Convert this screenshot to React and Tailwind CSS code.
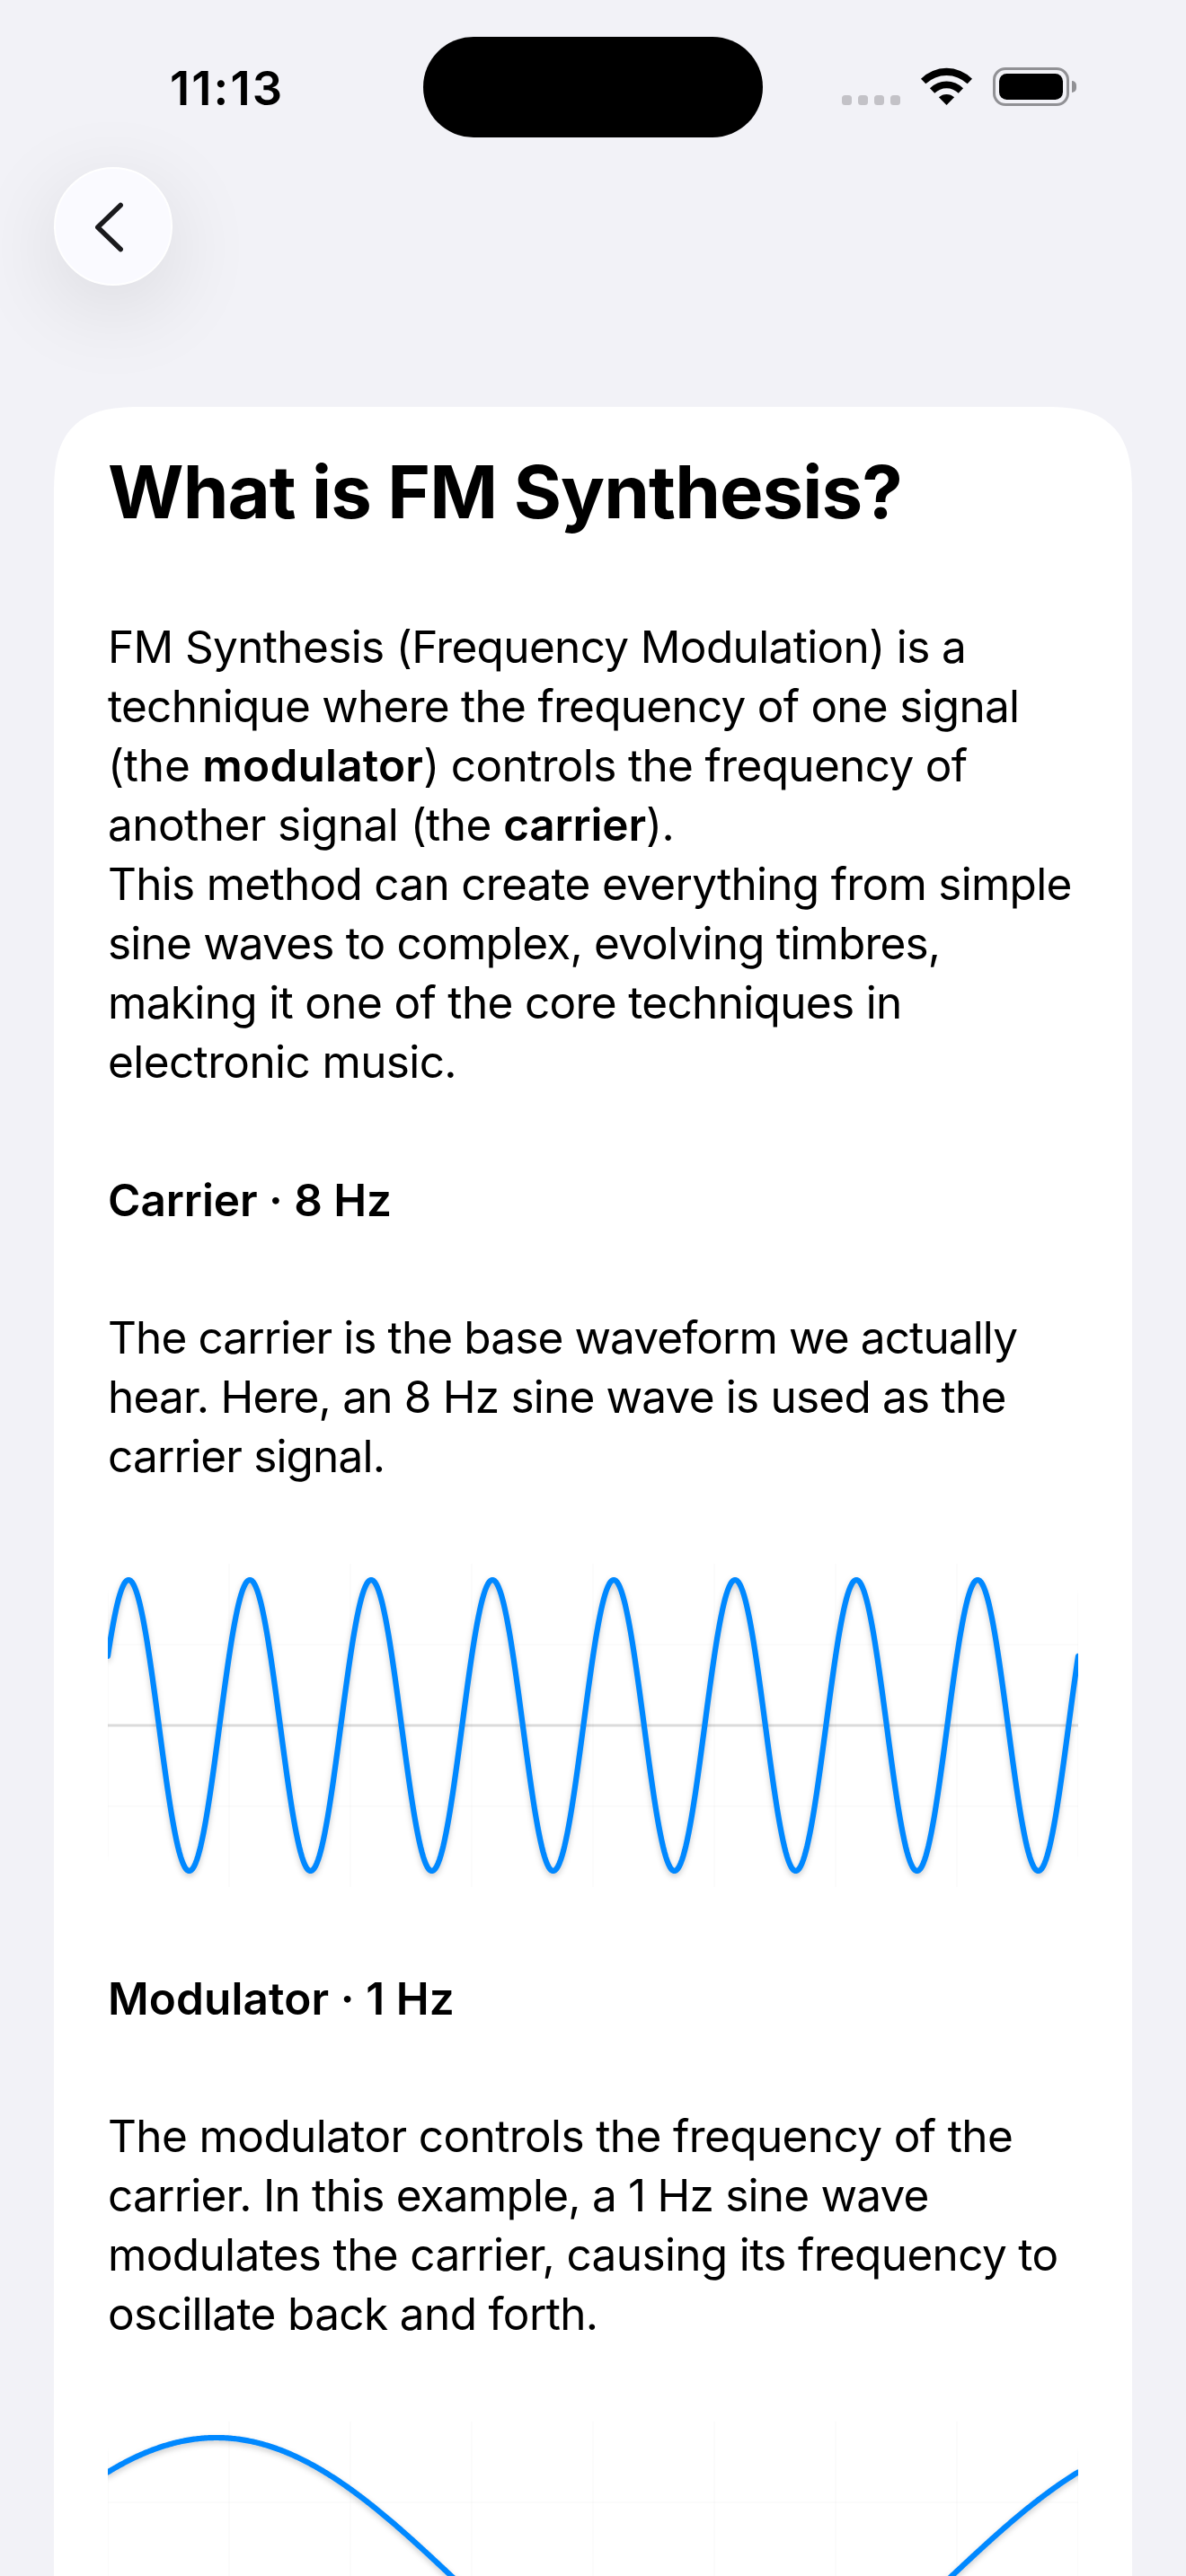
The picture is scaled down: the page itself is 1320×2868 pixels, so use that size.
const CHART_WIDTH = 1080;
const CHART_HEIGHT = 360;
const MID = CHART_HEIGHT / 2;
const AMPLITUDE = 162;

function wavePath(cycles, phase) {
  const points = [];
  for (let x = 0; x <= CHART_WIDTH; x += 1.5) {
    const angle = (x / CHART_WIDTH) * cycles * Math.PI * 2 + phase;
    points.push(`${x} ${(MID - AMPLITUDE * Math.sin(angle)).toFixed(2)}`);
  }
  return `M${points.join("L")}`;
}

function WaveChart({ cycles, phase, label }) {
  const columns = Array.from({ length: 9 }, (_, i) => i * 135);
  return (
    <div className="h-[360px] w-[1080px] shrink-0 overflow-hidden rounded-[36px]">
      <svg viewBox="0 0 1080 360" className="block size-full" role="img" aria-label={label}>
        <g stroke="#000" strokeOpacity="0.022" strokeWidth="1.5">
          {columns.map((x) => (
            <line key={x} x1={x} x2={x} y1="0" y2={CHART_HEIGHT} />
          ))}
          <line x1="0" x2={CHART_WIDTH} y1="90" y2="90" />
          <line x1="0" x2={CHART_WIDTH} y1="270" y2="270" />
        </g>
        <line x1="0" x2={CHART_WIDTH} y1={MID} y2={MID} stroke="#000" strokeOpacity="0.14" strokeWidth="3" />
        <path
          d={wavePath(cycles, phase)}
          fill="none"
          stroke="#0088ff"
          strokeWidth="6.2"
          strokeLinecap="round"
          strokeLinejoin="round"
          className="drop-shadow-[0_3px_3px_rgba(0,0,0,0.2)]"
        />
      </svg>
    </div>
  );
}

function WifiIcon() {
  return (
    <svg viewBox="0 0 172 126" className="h-[42px] w-[57px]" preserveAspectRatio="none" aria-label="Wi-Fi">
      <path d="M0 38A122 122 0 0 1 172 38L156 55A101.500 101.500 0 0 0 16 55Z" />
      <path d="M30 70A78 78 0 0 1 142 70L126 86A58 58 0 0 0 46 86Z" />
      <path d="M60 100A38 38 0 0 1 112 100L86 126Z" />
    </svg>
  );
}

function Battery() {
  return (
    <div className="flex items-center gap-[3px]">
      <div className="flex h-[43px] w-[85px] rounded-[14px] border-[3px] border-[#919195] p-1">
        <div className="flex-1 rounded-[8.500px] bg-black" />
      </div>
      <div className="h-[13px] w-[5px] rounded-r-full bg-[#919195]" />
    </div>
  );
}

function StatusBar() {
  return (
    <div className="grid h-[186px] shrink-0 grid-cols-[471px_378px_471px]">
      <div className="pt-[68px] pl-[189px] text-[52.5px] leading-[60px] font-semibold tracking-[2.1px]">11:13</div>
      <div className="mt-[41px] h-[112px] rounded-full bg-black" />
      <div className="flex items-start pt-[75px] pl-[88px]">
        <div className="mt-[31px] flex gap-[7px]">
          {[0, 1, 2, 3].map((dot) => (
            <div key={dot} className="size-[11px] rounded-[3.5px] bg-[#c3c2c7]" />
          ))}
        </div>
        <div className="ml-[23px]">
          <WifiIcon />
        </div>
        <div className="ml-[23px]">
          <Battery />
        </div>
      </div>
    </div>
  );
}

function BackButton() {
  return (
    <button
      aria-label="Back"
      className="ml-[60px] size-[132px] shrink-0 rounded-full border-2 border-white bg-[#fafaff] shadow-[0_24px_100px_rgba(0,0,0,0.11)]"
    >
      <svg viewBox="2 2 128 128" className="size-full" fill="none" stroke="#1a1a1d" strokeWidth="5.5" strokeLinecap="round" strokeLinejoin="round">
        <path d="M74.2 42.500L48.800 67L74.2 91.500" />
      </svg>
    </button>
  );
}

function Line({ className, children }) {
  return <span className={`block whitespace-pre ${className}`}>{children}</span>;
}

export default function App() {
  return (
    <div className="flex h-[2868px] w-[1320px] flex-col overflow-hidden bg-[#f2f2f7] font-[Inter,sans-serif] text-black">
      <StatusBar />
      <BackButton />
      <main className="mx-[60px] mt-[135px] h-[2600px] shrink-0 rounded-[100px] bg-white px-[60px] pt-[45px] text-[49.5px] leading-[66px] [corner-shape:superellipse(1.5)]">
        <h1 className="text-[81.5px] leading-[100px] font-bold tracking-[-0.93px] whitespace-nowrap">
          What is FM Synthesis?
        </h1>
        <p className="mt-[89px]">
          <Line className="tracking-[-0.65px]">FM Synthesis (Frequency Modulation) is a</Line>
          <Line className="tracking-[-0.74px]">technique where the frequency of one signal</Line>
          <Line className="tracking-[-0.65px]">
            <span className="tracking-[-0.2px]">(the </span>
            <strong className="font-semibold tracking-[0.2px]">modulator</strong>) controls the frequency of
          </Line>
          <Line className="tracking-[-0.56px]">
            another signal (the <strong className="font-semibold tracking-[-0.15px]">carrier</strong>).
          </Line>
          <Line className="tracking-[-0.71px]">This method can create everything from simple</Line>
          <Line className="tracking-[-0.80px]">sine waves to complex, evolving timbres,</Line>
          <Line className="tracking-[-0.66px]">making it one of the core techniques in</Line>
          <Line className="tracking-[-0.61px]">electronic music.</Line>
        </p>

        <h2 className="mt-[88px] font-semibold tracking-[-0.06px]">Carrier · 8 Hz</h2>
        <p className="my-[87px]">
          <Line className="tracking-[-0.88px]">The carrier is the base waveform we actually</Line>
          <Line className="tracking-[-0.79px]">hear. Here, an 8 Hz sine wave is used as the</Line>
          <Line className="tracking-[-0.83px]">carrier signal.</Line>
        </p>
        <WaveChart cycles={8} phase={0.496} label="8 Hz carrier sine wave" />

        <h2 className="mt-[91px] font-semibold tracking-[0.11px]">Modulator · 1 Hz</h2>
        <p className="my-[87px]">
          <Line className="tracking-[-0.61px]">The modulator controls the frequency of the</Line>
          <Line className="tracking-[-0.78px]">carrier. In this example, a 1 Hz sine wave</Line>
          <Line className="tracking-[-0.64px]">modulates the carrier, causing its frequency to</Line>
          <Line className="tracking-[-0.63px]">oscillate back and forth.</Line>
        </p>
        <WaveChart cycles={1} phase={0.868} label="1 Hz modulator sine wave" />
      </main>
    </div>
  );
}
